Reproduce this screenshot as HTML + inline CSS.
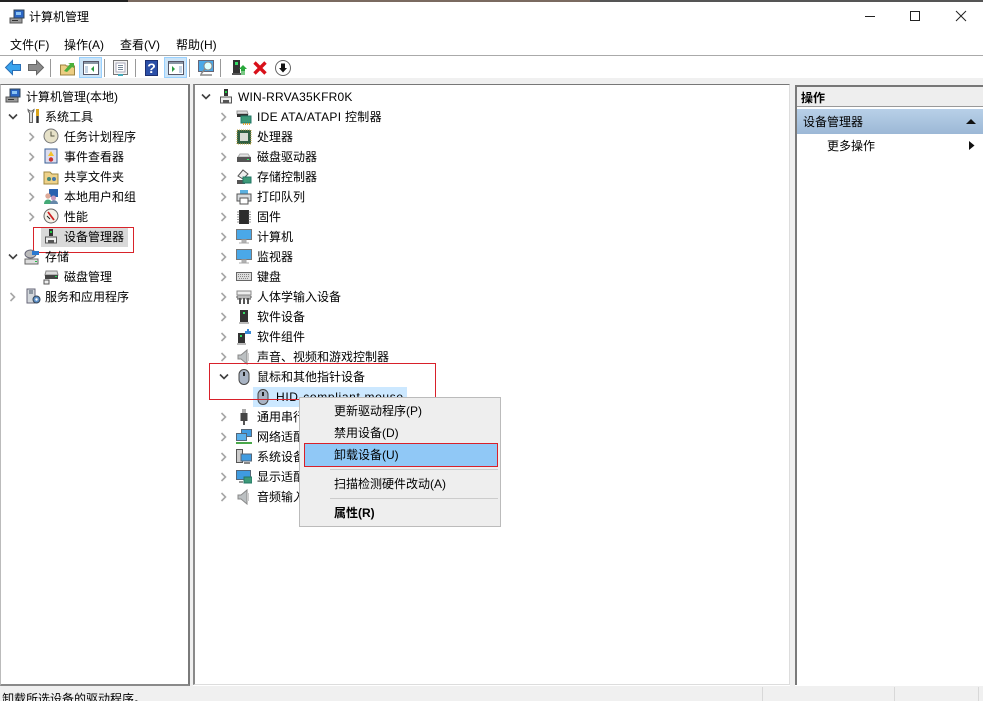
<!DOCTYPE html>
<html><head><meta charset="utf-8"><style>
html,body{margin:0;padding:0;width:983px;height:701px;overflow:hidden;background:#fff}
body{position:relative;font:12px/16px "Liberation Sans","Noto Sans CJK SC",sans-serif;color:#000}
.t{position:absolute;white-space:nowrap;line-height:16px;margin-top:1px}
.b{position:absolute;box-sizing:border-box}
svg{position:absolute;overflow:visible}
</style></head><body>
<svg width="0" height="0" style="position:absolute"><defs>
<symbol id="cr" viewBox="0 0 8 10"><path d="M1.500 1l4 4-4 4" fill="none" stroke="#a6a6a6" stroke-width="1.600"/></symbol>
<symbol id="dn" viewBox="0 0 10 8"><path d="M1 1.500l4 4 4-4" fill="none" stroke="#404040" stroke-width="1.600"/></symbol>
<symbol id="comp" viewBox="0 0 16 16"><rect x="1" y="9" width="12" height="5" fill="#9a9a9a" stroke="#555"/><rect x="5" y="1" width="10" height="8" fill="#2b66c4" stroke="#345"/><rect x="7" y="3" width="5" height="3" fill="#8cc4f4"/><rect x="3" y="11" width="6" height="1" fill="#333"/></symbol>
<symbol id="dev" viewBox="0 0 16 16"><rect x="6" y="1" width="4" height="7" fill="#333"/><rect x="7" y="3" width="2" height="2" fill="#2c4"/><path d="M2.500 15V9h11v6z" fill="#eee" stroke="#555"/><rect x="5" y="12" width="6" height="3" fill="#555"/></symbol>
<symbol id="clock" viewBox="0 0 16 16"><circle cx="8" cy="8" r="7" fill="#e6e1c8" stroke="#777"/><path d="M8 3.500V8h3.500" stroke="#554" fill="none"/></symbol>
<symbol id="log" viewBox="0 0 16 16"><rect x="2" y="1" width="12" height="14" fill="#dde" stroke="#3a5f95"/><path d="M8 3l3 5H5z" fill="#f2c22c"/><circle cx="8" cy="11.500" r="2.200" fill="#c33"/></symbol>
<symbol id="share" viewBox="0 0 16 16"><path d="M1 3h6l2 2h6v10H1z" fill="#eed28a" stroke="#a08840"/><circle cx="6" cy="10" r="2" fill="#487"/><circle cx="11" cy="10" r="2" fill="#47a"/></symbol>
<symbol id="users" viewBox="0 0 16 16"><rect x="6" y="0" width="9" height="8" fill="#2a62b0"/><circle cx="5" cy="7" r="2.700" fill="#da9"/><path d="M1 15c0-6 8-6 8 0z" fill="#4a7"/><circle cx="10.500" cy="9" r="2.500" fill="#c9b"/><path d="M7 15c0-5 8-5 8 0z" fill="#68a"/></symbol>
<symbol id="perf" viewBox="0 0 16 16"><circle cx="8" cy="8" r="7" fill="#f4f1e8" stroke="#666"/><path d="M5 4l6 8" stroke="#c22" stroke-width="1.800"/><path d="M4 8l3 3" stroke="#222"/></symbol>
<symbol id="tools" viewBox="0 0 16 16"><path d="M2 1.500c0 2 1 3 1.500 3.500v9.500h3V5C7 4.500 8 3.500 8 1.500L6 3H4z" fill="#ddd" stroke="#666"/><path d="M11.500 1v7" stroke="#d9a31a" stroke-width="3"/><path d="M11.500 8v7" stroke="#333" stroke-width="2.500"/></symbol>
<symbol id="store" viewBox="0 0 16 16"><ellipse cx="6.500" cy="5" rx="5.500" ry="4" fill="#bbb" stroke="#667"/><rect x="8" y="2" width="7" height="4" fill="#2a78d0"/><rect x="1" y="10" width="13" height="5" fill="#ddd" stroke="#666"/><rect x="11" y="12" width="2" height="1" fill="#2b4"/></symbol>
<symbol id="disk" viewBox="0 0 16 16"><path d="M3 2h11l1 4H2z" fill="#ddd" stroke="#888"/><rect x="2" y="6" width="13" height="4" fill="#444"/><rect x="12" y="7" width="2" height="1" fill="#2d5"/><rect x="1" y="11" width="5" height="4" fill="#eee" stroke="#555"/></symbol>
<symbol id="svc" viewBox="0 0 16 16"><rect x="2" y="1" width="8" height="14" fill="#d4d8dc" stroke="#667"/><path d="M4 3h4M4 5h4" stroke="#456"/><circle cx="11.500" cy="11.500" r="3.500" fill="#5d90c8" stroke="#345"/><circle cx="11.500" cy="11.500" r="1.200" fill="#fff"/></symbol>
<symbol id="ide" viewBox="0 0 16 16"><path d="M1 2h10l1 3H1z" fill="#ddd" stroke="#999"/><rect x="1" y="5" width="11" height="3" fill="#333"/><rect x="5" y="7" width="10" height="7" fill="#3d9a78" stroke="#276"/><path d="M7 15h7" stroke="#e8a530" stroke-dasharray="1 1" stroke-width="2"/></symbol>
<symbol id="cpu" viewBox="0 0 16 16"><rect x="1" y="1" width="14" height="14" fill="#315f42" stroke="#c8a94a" stroke-dasharray="1 1"/><rect x="4" y="4" width="8" height="8" fill="#d8dcd4"/></symbol>
<symbol id="hdd" viewBox="0 0 16 16"><path d="M2 8l2-3h8l2 3z" fill="#e4e4e4" stroke="#aaa"/><rect x="1" y="8" width="14" height="5" fill="#555"/><rect x="11" y="10" width="2" height="1" fill="#3e6"/></symbol>
<symbol id="sctl" viewBox="0 0 16 16"><path d="M2 7l5-6 5 4-5 5z" fill="#eee" stroke="#555"/><path d="M1 11h8v4H1z" fill="#555"/><rect x="7" y="8" width="8" height="6" fill="#3d9a78" stroke="#276"/></symbol>
<symbol id="prn" viewBox="0 0 16 16"><rect x="4" y="1" width="8" height="4" fill="#5ab0e0"/><rect x="1" y="5" width="14" height="7" fill="#d8dcdf" stroke="#555"/><rect x="4" y="9" width="8" height="6" fill="#fff" stroke="#555"/></symbol>
<symbol id="chip" viewBox="0 0 16 16"><rect x="3" y="1" width="10" height="14" fill="#333"/><path d="M1 3h14M1 5.500h14M1 8h14M1 10.500h14M1 13h14" stroke="#777" stroke-width=".8"/><rect x="3.500" y="1" width="9" height="14" fill="#2c2c2c"/></symbol>
<symbol id="mon" viewBox="0 0 16 16"><rect x=".5" y="1.500" width="15" height="10" fill="#4aa8e8" stroke="#777"/><path d="M6 12h4v2H6zM3 15h10" fill="#bbb" stroke="#aaa"/></symbol>
<symbol id="kb" viewBox="0 0 16 16"><rect x=".5" y="4.500" width="15" height="8" fill="#ddd" stroke="#666"/><path d="M2 6.500h12M2 8.500h12M3 10.500h10" stroke="#888" stroke-dasharray="1 1"/></symbol>
<symbol id="hid" viewBox="0 0 16 16"><rect x="1" y="6" width="14" height="4" fill="#bbb" stroke="#555" stroke-dasharray="2 1"/><rect x="1" y="2" width="14" height="4" fill="#eee" stroke="#888"/><path d="M4 15V9M8 15V9M12 15V9" stroke="#555" stroke-width="2"/></symbol>
<symbol id="sw" viewBox="0 0 16 16"><rect x="4" y="1" width="8" height="12" fill="#333"/><rect x="7" y="3" width="2" height="2" fill="#3d6"/><rect x="3" y="13" width="10" height="2" fill="#bbb"/></symbol>
<symbol id="swc" viewBox="0 0 16 16"><rect x="2" y="4" width="7" height="10" fill="#333"/><rect x="4" y="6" width="2" height="2" fill="#3d6"/><rect x="1" y="14" width="9" height="2" fill="#bbb"/><path d="M9 2h2V0h2v2h2v3H9z" fill="#3a8bd8"/></symbol>
<symbol id="spk" viewBox="0 0 16 16"><path d="M2 6h3l6-5v14l-6-5H2z" fill="#bcc0c2" stroke="#888"/><path d="M12 4v8" stroke="#ccc" stroke-width="2"/></symbol>
<symbol id="mouse" viewBox="0 0 16 16"><rect x="3" y=".5" width="10" height="15" rx="5" fill="#a9b4c4" stroke="#444"/><path d="M8 3v4" stroke="#222" stroke-width="2"/></symbol>
<symbol id="usb" viewBox="0 0 16 16"><rect x="6" y="0" width="4" height="4" fill="#aaa"/><rect x="4.500" y="4" width="7" height="8" fill="#444"/><rect x="7" y="12" width="2" height="4" fill="#555"/></symbol>
<symbol id="net" viewBox="0 0 16 16"><rect x="5.500" y=".5" width="10" height="7" fill="#3f9be0" stroke="#567"/><rect x=".5" y="4.500" width="10" height="7" fill="#5ab0ea" stroke="#567"/><path d="M0 14h16" stroke="#4aa84a" stroke-width="2"/></symbol>
<symbol id="sys" viewBox="0 0 16 16"><rect x=".5" y=".5" width="6" height="13" fill="#ccc" stroke="#555"/><rect x="5" y="5" width="10.500" height="7" fill="#3f9be0" stroke="#567"/><path d="M8 14h6" stroke="#888" stroke-width="2"/></symbol>
<symbol id="disp" viewBox="0 0 16 16"><rect x=".5" y="1.500" width="14" height="9" fill="#3f9be0" stroke="#567"/><rect x="8" y="8" width="8" height="6" fill="#3d9a78" stroke="#276"/><path d="M3 13h4" stroke="#999" stroke-width="2"/></symbol>
</defs></svg>

<div class="b" style="left:0;top:0;width:983px;height:2px;background:linear-gradient(90deg,#222 0 13%,#7a6a60 13% 60%,#555 60% 100%)"></div>

<svg style="left:9px;top:9px" width="16" height="16"><use href="#comp"/></svg>
<div class="t" style="left:29px;top:8px">计算机管理</div>

<div class="b" style="left:865px;top:16px;width:10px;height:1px;background:#222"></div>
<div class="b" style="left:910px;top:11px;width:10px;height:10px;border:1px solid #222"></div>
<svg style="left:956px;top:11px" width="10" height="10"><path d="M0 0l10 10M10 0L0 10" stroke="#222" fill="none"/></svg>

<div class="t" style="left:10px;top:36px">文件(F)</div>
<div class="t" style="left:64px;top:36px">操作(A)</div>
<div class="t" style="left:120px;top:36px">查看(V)</div>
<div class="t" style="left:176px;top:36px">帮助(H)</div>
<div class="b" style="left:0;top:55px;width:983px;height:1px;background:#aaa"></div>

<svg style="left:5px;top:60px" width="16" height="15"><path d="M.5 7.500L7.500.5v4h8v6h-8v4z" fill="#39a3ee" stroke="#2a6fb5"/></svg>
<svg style="left:28px;top:60px" width="16" height="15"><path d="M15.500 7.500L8.500.5v4h-8v6h8v4z" fill="#8c8c8c" stroke="#666"/></svg>
<div class="b" style="left:50px;top:59px;width:1px;height:18px;background:#999"></div>
<svg style="left:60px;top:60px" width="15" height="16"><path d="M.5 5h5l1 1h8v9H.5z" fill="#eccd82" stroke="#9c8440"/><path d="M4 11l6-7-2-1h6v5l-2-1-5 5z" fill="#4bb03c"/></svg>
<div class="b" style="left:79px;top:57px;width:23px;height:21px;background:#cce4f7;border:1px solid #99d1ff"></div>
<svg style="left:83px;top:61px" width="16" height="14"><rect x=".5" y=".5" width="15" height="13" fill="#fff" stroke="#556"/><rect x="1" y="1" width="14" height="2" fill="#8a97a6"/><rect x="2" y="5" width="3" height="7" fill="#c4d4e4"/><path d="M11 5v6l-3-3z" fill="#2a9a40"/></svg>
<div class="b" style="left:104px;top:59px;width:1px;height:18px;background:#999"></div>
<svg style="left:113px;top:60px" width="15" height="16"><rect x=".5" y=".5" width="14" height="14" fill="#f4f4f4" stroke="#777"/><rect x="3" y="3" width="9" height="9" fill="#fff" stroke="#aab"/><path d="M5 5.500h5M5 7.500h5M5 9.500h5" stroke="#789"/><rect x="5" y="14" width="5" height="2" fill="#4ab"/></svg>
<div class="b" style="left:135px;top:59px;width:1px;height:18px;background:#999"></div>
<div class="b" style="left:145px;top:60px;width:13px;height:16px;background:#2b4fa8;border:1px solid #1c2f70;color:#fff;font:bold 14px/15px 'Liberation Sans',sans-serif;text-align:center">?</div>
<div class="b" style="left:164px;top:57px;width:23px;height:21px;background:#cce4f7;border:1px solid #99d1ff"></div>
<svg style="left:168px;top:61px" width="16" height="14"><rect x=".5" y=".5" width="15" height="13" fill="#fff" stroke="#556"/><rect x="1" y="1" width="14" height="2" fill="#8a97a6"/><rect x="11" y="5" width="3" height="7" fill="#c4d4e4"/><path d="M4 5v6l3-3z" fill="#2a9a40"/></svg>
<div class="b" style="left:189px;top:59px;width:1px;height:18px;background:#999"></div>
<svg style="left:198px;top:60px" width="16" height="16"><rect x=".5" y=".5" width="15" height="11" fill="#4aa8e8" stroke="#667"/><circle cx="10" cy="6" r="4" fill="#dff" stroke="#888"/><path d="M7 9l-4 5M2 15h12" stroke="#888" stroke-width="1.500"/></svg>
<div class="b" style="left:220px;top:59px;width:1px;height:18px;background:#999"></div>
<svg style="left:232px;top:60px" width="15" height="16"><rect x="1" y="0" width="7" height="13" fill="#333"/><rect x="3" y="2" width="3" height="3" fill="#3d6"/><rect x="0" y="13" width="9" height="2" fill="#555"/><path d="M11 5l4 4h-2v2H9V9H7z" fill="#2aa83c"/><path d="M9 12h4M9 14h4" stroke="#2aa83c" stroke-width="1.200"/></svg>
<svg style="left:253px;top:61px" width="14" height="14"><path d="M1.500 1.500l11 11M12.500 1.500l-11 11" stroke="#d8101a" stroke-width="3.400"/></svg>
<svg style="left:275px;top:60px" width="16" height="16"><circle cx="8" cy="8" r="7.500" fill="#fff" stroke="#666"/><path d="M6 3.500h4V8h2l-4 4.500L4 8h2z" fill="#111"/></svg>

<div class="b" style="left:0;top:78px;width:983px;height:7px;background:#f0f0f0"></div>

<div class="b" style="left:0;top:84px;width:190px;height:602px;background:#fff;border-top:1px solid #777;border-right:2px solid #7a7a7a;border-bottom:2px solid #8a8a8a;border-left:1px solid #bbb"></div>
<div class="b" style="left:190px;top:84px;width:3px;height:602px;background:#f0f0f0"></div>
<div class="b" style="left:193px;top:84px;width:597px;height:601px;background:#fff;border-top:1px solid #777;border-left:2px solid #8a8a8a;border-right:1px solid #ddd;border-bottom:1px solid #ddd"></div>
<div class="b" style="left:790px;top:84px;width:5px;height:602px;background:#f0f0f0"></div>
<div class="b" style="left:795px;top:85px;width:188px;height:600px;background:#fff;border-top:2px solid #777;border-left:2px solid #7a7a7a"></div>

<div class="b" style="left:797px;top:87px;width:186px;height:20px;background:#eee;border-bottom:1px solid #999"></div>
<div class="t" style="left:801px;top:89px;font-weight:bold">操作</div>
<div class="b" style="left:797px;top:109px;width:186px;height:25px;background:linear-gradient(#b8d0e8,#9cb8d6)"></div>
<div class="t" style="left:803px;top:113px">设备管理器</div>
<svg style="left:966px;top:118px" width="10" height="6"><path d="M0 6L5 1l5 5z" fill="#111"/></svg>
<div class="t" style="left:827px;top:137px">更多操作</div>
<svg style="left:969px;top:141px" width="6" height="9"><path d="M0 0l5.500 4.500L0 9z" fill="#111"/></svg>

<svg style="left:5px;top:88px" width="16" height="16"><use href="#comp"/></svg>
<div class="t" style="left:26px;top:88px">计算机管理(本地)</div>
<svg style="left:8px;top:113px" width="10" height="8"><use href="#dn"/></svg>
<svg style="left:26px;top:108px" width="16" height="16"><use href="#tools"/></svg>
<div class="t" style="left:45px;top:108px">系统工具</div>
<svg style="left:28px;top:132px" width="8" height="10"><use href="#cr"/></svg>
<svg style="left:43px;top:128px" width="16" height="16"><use href="#clock"/></svg>
<div class="t" style="left:64px;top:128px">任务计划程序</div>
<svg style="left:28px;top:152px" width="8" height="10"><use href="#cr"/></svg>
<svg style="left:43px;top:148px" width="16" height="16"><use href="#log"/></svg>
<div class="t" style="left:64px;top:148px">事件查看器</div>
<svg style="left:28px;top:172px" width="8" height="10"><use href="#cr"/></svg>
<svg style="left:43px;top:169px" width="16" height="16"><use href="#share"/></svg>
<div class="t" style="left:64px;top:168px">共享文件夹</div>
<svg style="left:28px;top:192px" width="8" height="10"><use href="#cr"/></svg>
<svg style="left:43px;top:189px" width="16" height="16"><use href="#users"/></svg>
<div class="t" style="left:64px;top:188px">本地用户和组</div>
<svg style="left:28px;top:212px" width="8" height="10"><use href="#cr"/></svg>
<svg style="left:43px;top:208px" width="16" height="16"><use href="#perf"/></svg>
<div class="t" style="left:64px;top:208px">性能</div>
<div class="b" style="left:41px;top:227px;width:87px;height:20px;background:#d9d9d9"></div>
<svg style="left:43px;top:228px" width="16" height="16"><use href="#dev"/></svg>
<div class="t" style="left:64px;top:228px">设备管理器</div>
<div class="b" style="left:33px;top:227px;width:101px;height:26px;border:1px solid #d8232a"></div>
<svg style="left:8px;top:253px" width="10" height="8"><use href="#dn"/></svg>
<svg style="left:24px;top:249px" width="16" height="16"><use href="#store"/></svg>
<div class="t" style="left:45px;top:248px">存储</div>
<svg style="left:43px;top:269px" width="16" height="16"><use href="#disk"/></svg>
<div class="t" style="left:64px;top:268px">磁盘管理</div>
<svg style="left:9px;top:292px" width="8" height="10"><use href="#cr"/></svg>
<svg style="left:25px;top:288px" width="16" height="16"><use href="#svc"/></svg>
<div class="t" style="left:45px;top:288px">服务和应用程序</div>

<svg style="left:201px;top:93px" width="10" height="8"><use href="#dn"/></svg>
<svg style="left:218px;top:88px" width="16" height="16"><use href="#dev"/></svg>
<div class="t" style="left:238px;top:88px;letter-spacing:.2px">WIN-RRVA35KFR0K</div>

<svg style="left:220px;top:112px" width="8" height="10"><use href="#cr"/></svg>
<svg style="left:236px;top:109px" width="16" height="16"><use href="#ide"/></svg>
<div class="t" style="left:257px;top:108px;letter-spacing:.3px">IDE ATA/ATAPI 控制器</div>
<svg style="left:220px;top:132px" width="8" height="10"><use href="#cr"/></svg>
<svg style="left:236px;top:129px" width="16" height="16"><use href="#cpu"/></svg>
<div class="t" style="left:257px;top:128px">处理器</div>
<svg style="left:220px;top:152px" width="8" height="10"><use href="#cr"/></svg>
<svg style="left:236px;top:149px" width="16" height="16"><use href="#hdd"/></svg>
<div class="t" style="left:257px;top:148px">磁盘驱动器</div>
<svg style="left:220px;top:172px" width="8" height="10"><use href="#cr"/></svg>
<svg style="left:236px;top:169px" width="16" height="16"><use href="#sctl"/></svg>
<div class="t" style="left:257px;top:168px">存储控制器</div>
<svg style="left:220px;top:192px" width="8" height="10"><use href="#cr"/></svg>
<svg style="left:236px;top:189px" width="16" height="16"><use href="#prn"/></svg>
<div class="t" style="left:257px;top:188px">打印队列</div>
<svg style="left:220px;top:212px" width="8" height="10"><use href="#cr"/></svg>
<svg style="left:236px;top:209px" width="16" height="16"><use href="#chip"/></svg>
<div class="t" style="left:257px;top:208px">固件</div>
<svg style="left:220px;top:232px" width="8" height="10"><use href="#cr"/></svg>
<svg style="left:236px;top:228px" width="16" height="16"><use href="#mon"/></svg>
<div class="t" style="left:257px;top:228px">计算机</div>
<svg style="left:220px;top:252px" width="8" height="10"><use href="#cr"/></svg>
<svg style="left:236px;top:248px" width="16" height="16"><use href="#mon"/></svg>
<div class="t" style="left:257px;top:248px">监视器</div>
<svg style="left:220px;top:272px" width="8" height="10"><use href="#cr"/></svg>
<svg style="left:236px;top:268px" width="16" height="16"><use href="#kb"/></svg>
<div class="t" style="left:257px;top:268px">键盘</div>
<svg style="left:220px;top:292px" width="8" height="10"><use href="#cr"/></svg>
<svg style="left:236px;top:289px" width="16" height="16"><use href="#hid"/></svg>
<div class="t" style="left:257px;top:288px">人体学输入设备</div>
<svg style="left:220px;top:312px" width="8" height="10"><use href="#cr"/></svg>
<svg style="left:236px;top:309px" width="16" height="16"><use href="#sw"/></svg>
<div class="t" style="left:257px;top:308px">软件设备</div>
<svg style="left:220px;top:332px" width="8" height="10"><use href="#cr"/></svg>
<svg style="left:236px;top:329px" width="16" height="16"><use href="#swc"/></svg>
<div class="t" style="left:257px;top:328px">软件组件</div>
<svg style="left:220px;top:352px" width="8" height="10"><use href="#cr"/></svg>
<svg style="left:236px;top:349px" width="16" height="16"><use href="#spk"/></svg>
<div class="t" style="left:257px;top:348px">声音、视频和游戏控制器</div>
<svg style="left:219px;top:373px" width="10" height="8"><use href="#dn"/></svg>
<svg style="left:236px;top:369px" width="16" height="16"><use href="#mouse"/></svg>
<div class="t" style="left:257px;top:368px">鼠标和其他指针设备</div>
<div class="b" style="left:253px;top:387px;width:154px;height:20px;background:#cce8ff"></div>
<svg style="left:255px;top:389px" width="16" height="16"><use href="#mouse"/></svg>
<div class="t" style="left:276px;top:388px;letter-spacing:.65px">HID-compliant mouse</div>
<div class="b" style="left:209px;top:363px;width:227px;height:37px;border:1px solid #d8202a"></div>
<svg style="left:220px;top:412px" width="8" height="10"><use href="#cr"/></svg>
<svg style="left:236px;top:409px" width="16" height="16"><use href="#usb"/></svg>
<div class="t" style="left:257px;top:408px">通用串行总线控制器</div>
<svg style="left:220px;top:432px" width="8" height="10"><use href="#cr"/></svg>
<svg style="left:236px;top:429px" width="16" height="16"><use href="#net"/></svg>
<div class="t" style="left:257px;top:428px">网络适配器</div>
<svg style="left:220px;top:452px" width="8" height="10"><use href="#cr"/></svg>
<svg style="left:236px;top:449px" width="16" height="16"><use href="#sys"/></svg>
<div class="t" style="left:257px;top:448px">系统设备</div>
<svg style="left:220px;top:472px" width="8" height="10"><use href="#cr"/></svg>
<svg style="left:236px;top:469px" width="16" height="16"><use href="#disp"/></svg>
<div class="t" style="left:257px;top:468px">显示适配器</div>
<svg style="left:220px;top:492px" width="8" height="10"><use href="#cr"/></svg>
<svg style="left:236px;top:489px" width="16" height="16"><use href="#spk"/></svg>
<div class="t" style="left:257px;top:488px">音频输入和输出</div>

<div class="b" style="left:299px;top:397px;width:202px;height:130px;background:#eee;border:1px solid #bbb"></div>
<div class="t" style="left:334px;top:402px">更新驱动程序(P)</div>
<div class="t" style="left:334px;top:424px">禁用设备(D)</div>
<div class="b" style="left:304px;top:443px;width:194px;height:24px;background:#90c8f6;border:1px solid #d8202a"></div>
<div class="t" style="left:334px;top:446px">卸载设备(U)</div>
<div class="b" style="left:330px;top:469px;width:168px;height:1px;background:#ccc"></div>
<div class="t" style="left:334px;top:475px">扫描检测硬件改动(A)</div>
<div class="b" style="left:330px;top:498px;width:168px;height:1px;background:#ccc"></div>
<div class="t" style="left:334px;top:504px;font-weight:bold">属性(R)</div>

<div class="b" style="left:0;top:686px;width:983px;height:15px;background:#f0f0f0"></div>
<div class="b" style="left:762px;top:687px;width:1px;height:14px;background:#d8d8d8"></div>
<div class="b" style="left:894px;top:687px;width:1px;height:14px;background:#d8d8d8"></div>
<div class="b" style="left:978px;top:687px;width:1px;height:14px;background:#d8d8d8"></div>
<div class="t" style="left:2px;top:690px">卸载所选设备的驱动程序。</div>
</body></html>
